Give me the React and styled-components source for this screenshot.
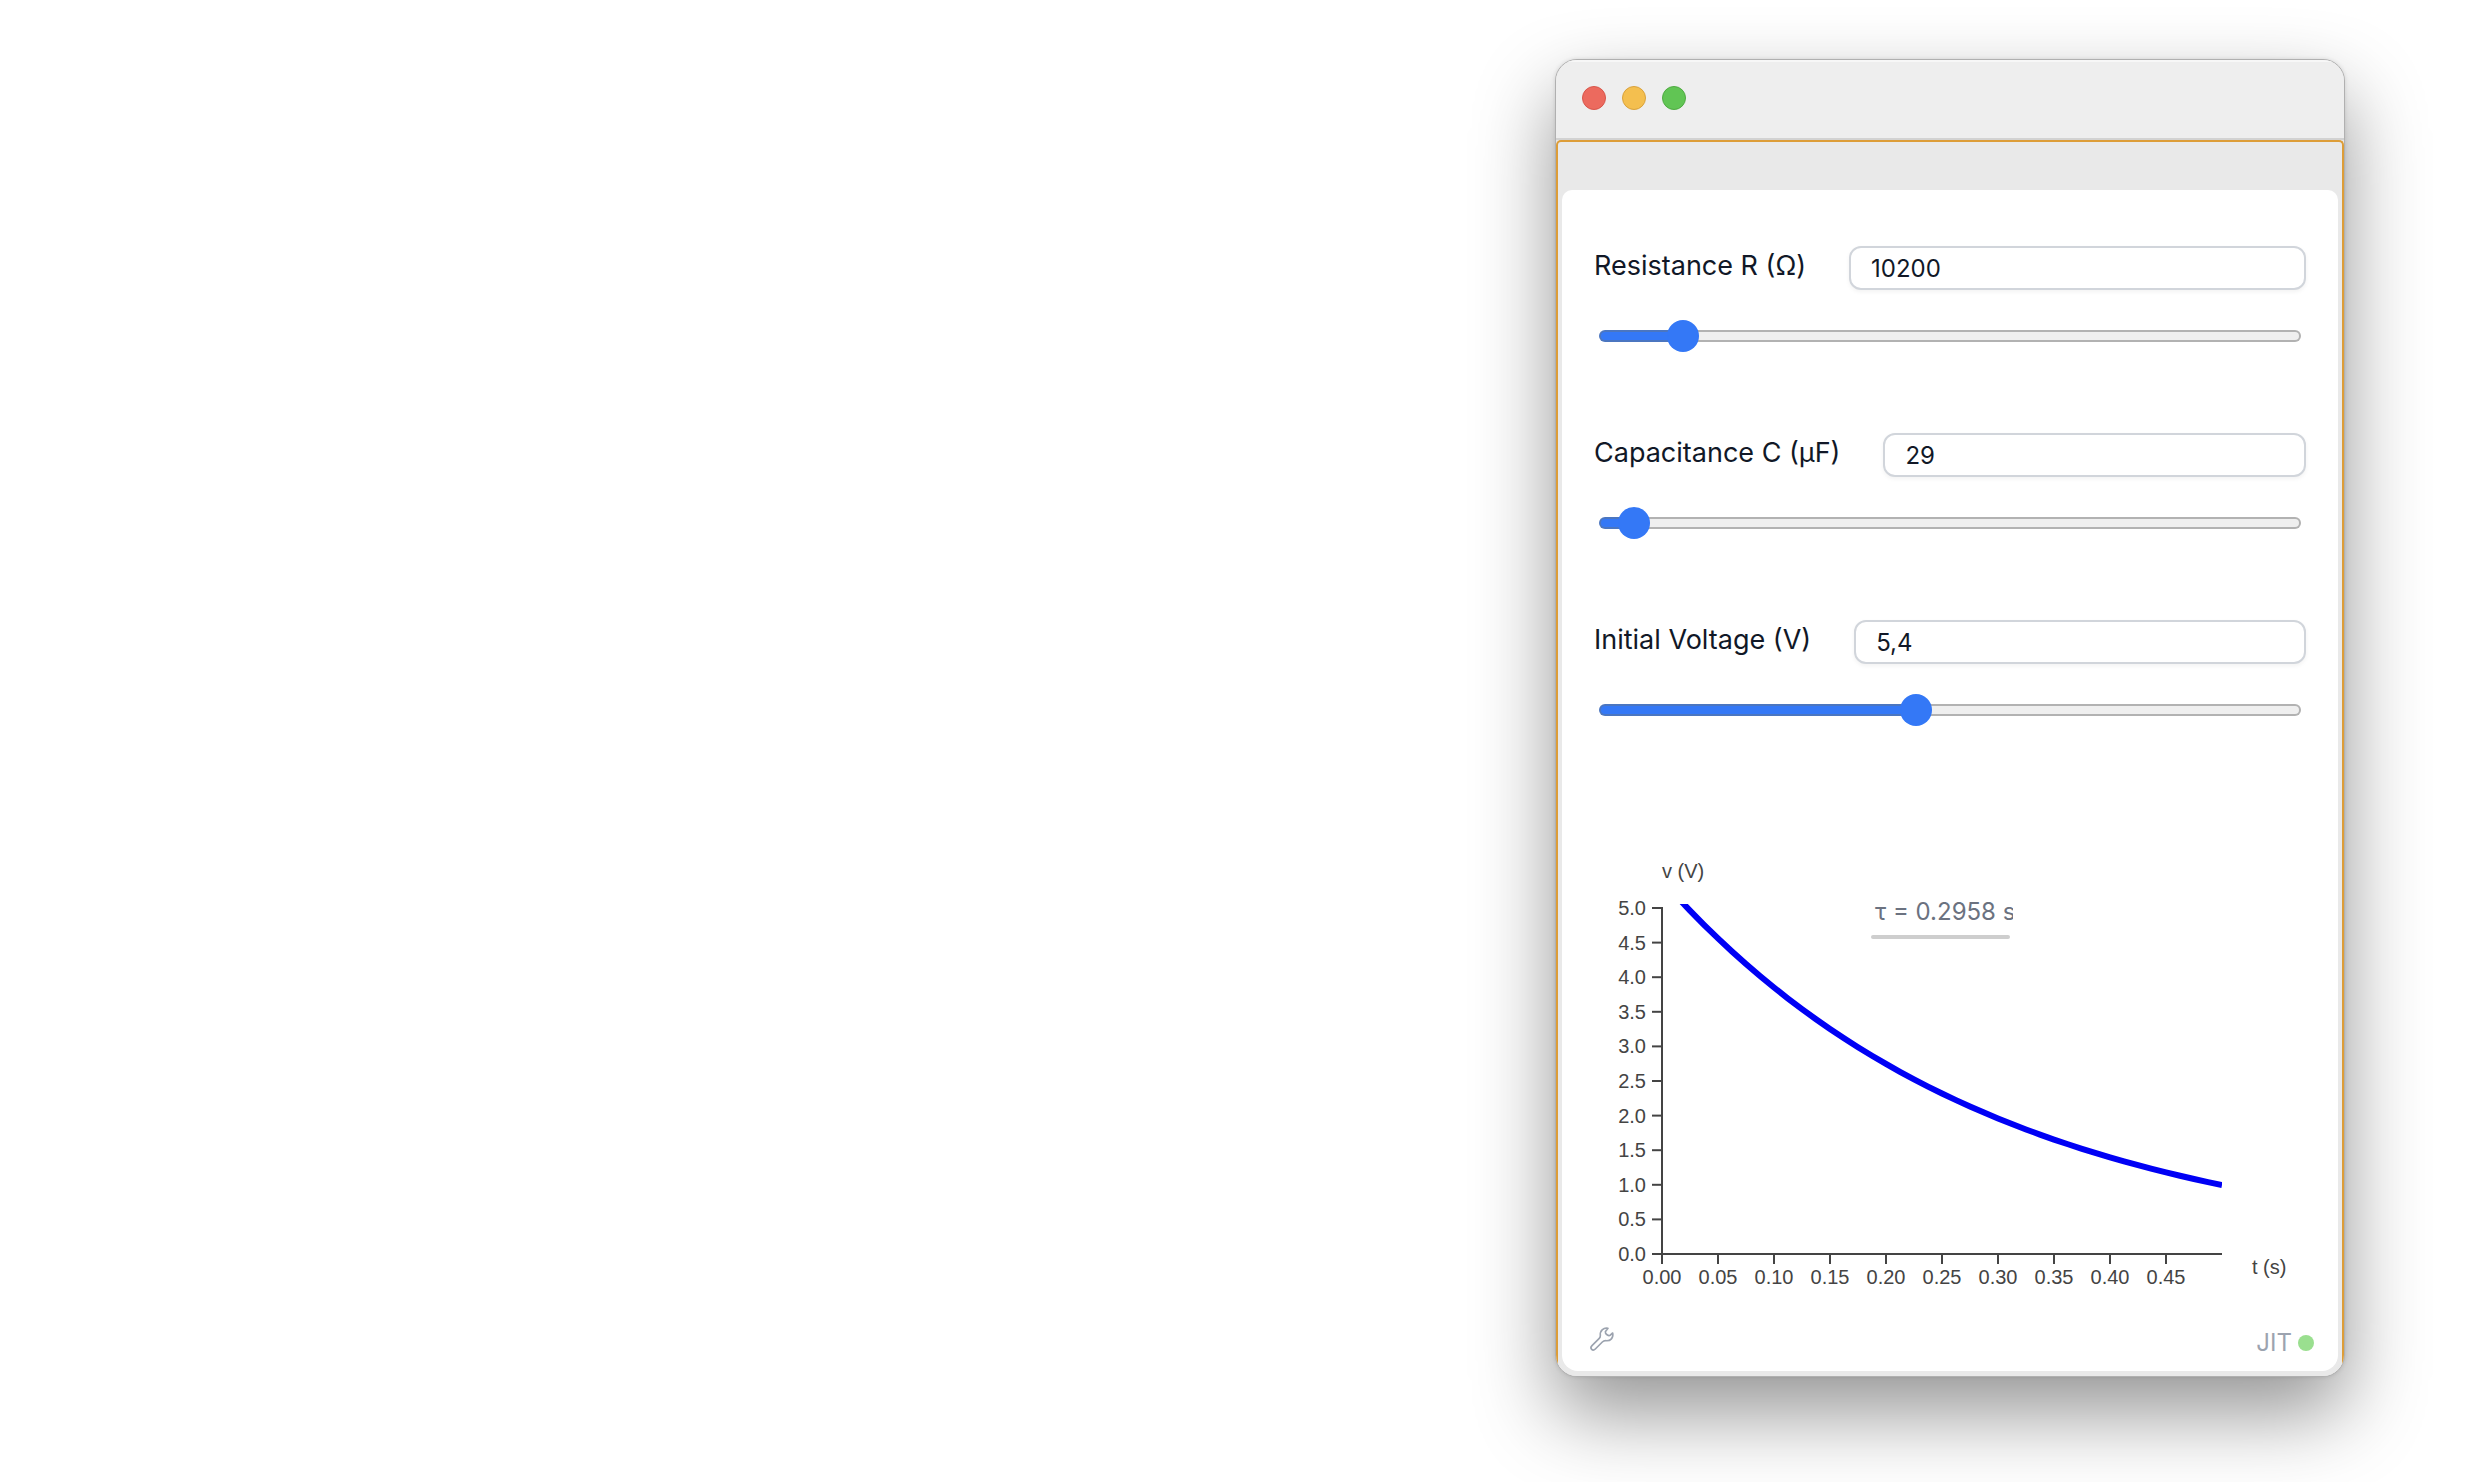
import React, { useState } from "react";
import styled, { createGlobalStyle } from "styled-components";

const GlobalStyle = createGlobalStyle`
  * { box-sizing: border-box; }
  body {
    margin: 0;
    background: #ffffff;
    font-family: Inter, "Liberation Sans", sans-serif;
    color: #111827;
  }
`;

const Desktop = styled.main`
  display: flex;
  justify-content: flex-end;
  min-height: 100vh;
  padding: 59px 147px 105px 24px;
  overflow: hidden;
`;

const Window = styled.section`
  display: flex;
  flex-direction: column;
  width: 100%;
  max-width: 790px;
  border: 1px solid #b0b0b0;
  border-radius: 22px;
  background: #e7e6e6;
  overflow: hidden;
  box-shadow: 0 36px 80px rgba(0, 0, 0, 0.42), 0 0 4px rgba(0, 0, 0, 0.12);
`;

const TitleBar = styled.header`
  display: flex;
  gap: 16px;
  height: 80px;
  padding: 26px;
  background: #eeeeee;
  border-bottom: 2px solid #d2d2d2;
  box-shadow: inset 0 2px 0 #f7f7f7;
`;

const Light = styled.button`
  width: 24px;
  height: 24px;
  padding: 0;
  border: 1px solid ${(p) => p.$edge};
  border-radius: 50%;
  background: ${(p) => p.$fill};
`;

const Frame = styled.div`
  display: flex;
  flex: 1;
  flex-direction: column;
  border: 2px solid #dd9d38;
  border-bottom: 0;
  border-radius: 5px 5px 0 0;
  padding: 48px 4px 5px;
  background: #e9e9e9;
`;

const Card = styled.div`
  display: flex;
  flex: 1;
  flex-direction: column;
  padding: 56px 24px 16px 26px;
  border-radius: 10px 10px 16px 16px;
  background: #ffffff;
`;

const Controls = styled.div`
  display: flex;
  flex-direction: column;
  gap: 81px;
  padding: 0 8px 0 6px;
`;

const Control = styled.div`
  display: flex;
  flex-direction: column;
  gap: 30px;
`;

const Field = styled.div`
  display: flex;
  gap: 43px;
`;

const Label = styled.label`
  font-size: 27px;
  line-height: 40px;
  white-space: nowrap;
`;

const NumberBox = styled.input`
  flex: 1;
  min-width: 0;
  height: 44px;
  padding: 0 20px;
  border: 2px solid #d1d5db;
  border-radius: 12px;
  background: #ffffff;
  box-shadow: 0 2px 4px rgba(0, 0, 0, 0.05);
  color: #111827;
  font: 24px/40px Inter, "Liberation Sans", sans-serif;
`;

const Slider = styled.input`
  appearance: none;
  height: 32px;
  margin: 0 5px;
  background: transparent;

  &::-webkit-slider-runnable-track {
    --edge: calc(15px + (100% - 30px) * var(--fill));
    height: 12px;
    border: 2px solid transparent;
    border-radius: 6px;
    background:
      linear-gradient(to right, #3478f6 var(--edge), #efefef var(--edge)) padding-box,
      linear-gradient(to right, #4b76c0 var(--edge), #b2b2b2 var(--edge)) border-box;
  }

  &::-webkit-slider-thumb {
    appearance: none;
    width: 30px;
    height: 30px;
    margin: -11px -1px 0;
    border-radius: 50%;
    background: #3478f6;
    box-shadow: 0 0 0 1px #3478f6;
  }
`;

const ChartArea = styled.figure`
  position: relative;
  margin: 127px 0 auto;
`;

const Chart = styled.svg`
  display: block;
  width: 100%;
  height: auto;
  fill: #444444;
  font-family: "Liberation Sans", sans-serif;
  font-size: 20px;
`;

const TimeConstant = styled.figcaption`
  position: absolute;
  top: 43px;
  left: 283px;
  width: 142px;
  padding-left: 4px;
  overflow: hidden;
  color: #6b7280;
  font-size: 24px;
  line-height: 32px;
  white-space: nowrap;

  &::after {
    content: "";
    display: block;
    width: 139px;
    height: 4px;
    margin: 7px 0 0 -4px;
    border-radius: 2px;
    background: #cecece;
  }
`;

const Footer = styled.footer`
  display: flex;
  align-items: flex-start;
  justify-content: space-between;
  height: 32px;
  color: #9ca3af;
  font-size: 24px;
  line-height: 32px;
`;

const ToolButton = styled.button`
  display: flex;
  align-items: center;
  width: 32px;
  height: 32px;
  padding: 0;
  border: 0;
  background: transparent;
  color: inherit;
`;

const Status = styled.div`
  display: flex;
  align-items: center;
  gap: 6px;
  padding-top: 4px;
`;

const Dot = styled.span`
  width: 16px;
  height: 16px;
  border-radius: 50%;
  background: #9adf8f;
`;

const FIELDS = [
  { id: "resistance", label: "Resistance R (Ω)", min: 100, max: 100000, step: 100, value: 10200 },
  { id: "capacitance", label: "Capacitance C (μF)", min: 1, max: 1000, step: 1, value: 29 },
  { id: "voltage", label: "Initial Voltage (V)", min: 0, max: 12, step: 0.1, value: 5.4 },
];

const ORIGIN = { x: 74, y: 385 };
const PX_PER_SECOND = 1120;
const PX_PER_VOLT = 69.2;

function DecayChart({ tau, v0 }) {
  const points = Array.from({ length: 41 }, (_, i) => {
    const t = i * 0.0125;
    const v = v0 * Math.exp(-t / tau);
    return `${ORIGIN.x + t * PX_PER_SECOND},${ORIGIN.y - v * PX_PER_VOLT}`;
  }).join(" ");
  const voltTicks = Array.from({ length: 11 }, (_, i) => i / 2);
  const timeTicks = Array.from({ length: 10 }, (_, i) => i / 20);
  return (
    <Chart viewBox="0 -16 726 446" role="img" aria-label="Voltage over time">
      <clipPath id="plot">
        <rect x="74" y="35" width="560" height="354" />
      </clipPath>
      <text x="74" y="9">v (V)</text>
      <text x="664" y="405">t (s)</text>
      <g stroke="#444444" strokeWidth="2">
        <path d="M74 38V386M73 385H634" fill="none" />
        {voltTicks.map((v) => (
          <path key={v} d={`M64 ${ORIGIN.y - v * PX_PER_VOLT}h10`} />
        ))}
        {timeTicks.map((t) => (
          <path key={t} d={`M${ORIGIN.x + t * PX_PER_SECOND} 385v10`} />
        ))}
      </g>
      {voltTicks.map((v) => (
        <text key={v} x="58" y={ORIGIN.y + 7 - v * PX_PER_VOLT} textAnchor="end">{v.toFixed(1)}</text>
      ))}
      {timeTicks.map((t) => (
        <text key={t} x={ORIGIN.x + t * PX_PER_SECOND} y="415" textAnchor="middle">{t.toFixed(2)}</text>
      ))}
      <polyline points={points} clipPath="url(#plot)" fill="none" stroke="#0000f5" strokeWidth="6" />
    </Chart>
  );
}

function WrenchIcon() {
  return (
    <svg width="28" height="28" viewBox="24 28 84 84" fill="none" stroke="currentColor" strokeWidth="5" strokeLinejoin="round" aria-hidden="true">
      <path d="M84 38C72 35 59 44 61 60C61 64 60 66 57 69L36 90C28 98 38 108 46 100L67 79C70 76 73 75 77 75C92 77 101 66 98 52L90 59C86 62 75 55 76 48Z" />
    </svg>
  );
}

export default function App() {
  const [values, setValues] = useState(FIELDS.map((f) => f.value));
  const update = (index, next) => {
    const number = Number(String(next).replace(",", "."));
    if (!Number.isNaN(number)) setValues(values.map((v, i) => (i === index ? number : v)));
  };
  const tau = values[0] * values[1] * 1e-6;

  return (
    <>
      <GlobalStyle />
      <Desktop>
        <Window>
          <TitleBar>
            <Light aria-label="Close" $fill="#ec6a5e" $edge="#d8564b" />
            <Light aria-label="Minimise" $fill="#f4bf4f" $edge="#d9a23c" />
            <Light aria-label="Zoom" $fill="#61c554" $edge="#4fab42" />
          </TitleBar>
          <Frame>
            <Card>
              <Controls>
                {FIELDS.map((f, i) => (
                  <Control key={f.id}>
                    <Field>
                      <Label htmlFor={f.id}>{f.label}</Label>
                      <NumberBox
                        id={f.id}
                        inputMode="decimal"
                        value={String(values[i]).replace(".", ",")}
                        onChange={(e) => update(i, e.target.value)}
                      />
                    </Field>
                    <Slider
                      type="range"
                      aria-label={f.label}
                      min={f.min}
                      max={f.max}
                      step={f.step}
                      value={values[i]}
                      onChange={(e) => update(i, e.target.value)}
                      style={{ "--fill": (values[i] - f.min) / (f.max - f.min) }}
                    />
                  </Control>
                ))}
              </Controls>
              <ChartArea>
                <DecayChart tau={tau} v0={values[2]} />
                <TimeConstant>τ = {tau.toFixed(4)} s</TimeConstant>
              </ChartArea>
              <Footer>
                <ToolButton aria-label="Settings">
                  <WrenchIcon />
                </ToolButton>
                <Status>
                  JIT
                  <Dot />
                </Status>
              </Footer>
            </Card>
          </Frame>
        </Window>
      </Desktop>
    </>
  );
}
